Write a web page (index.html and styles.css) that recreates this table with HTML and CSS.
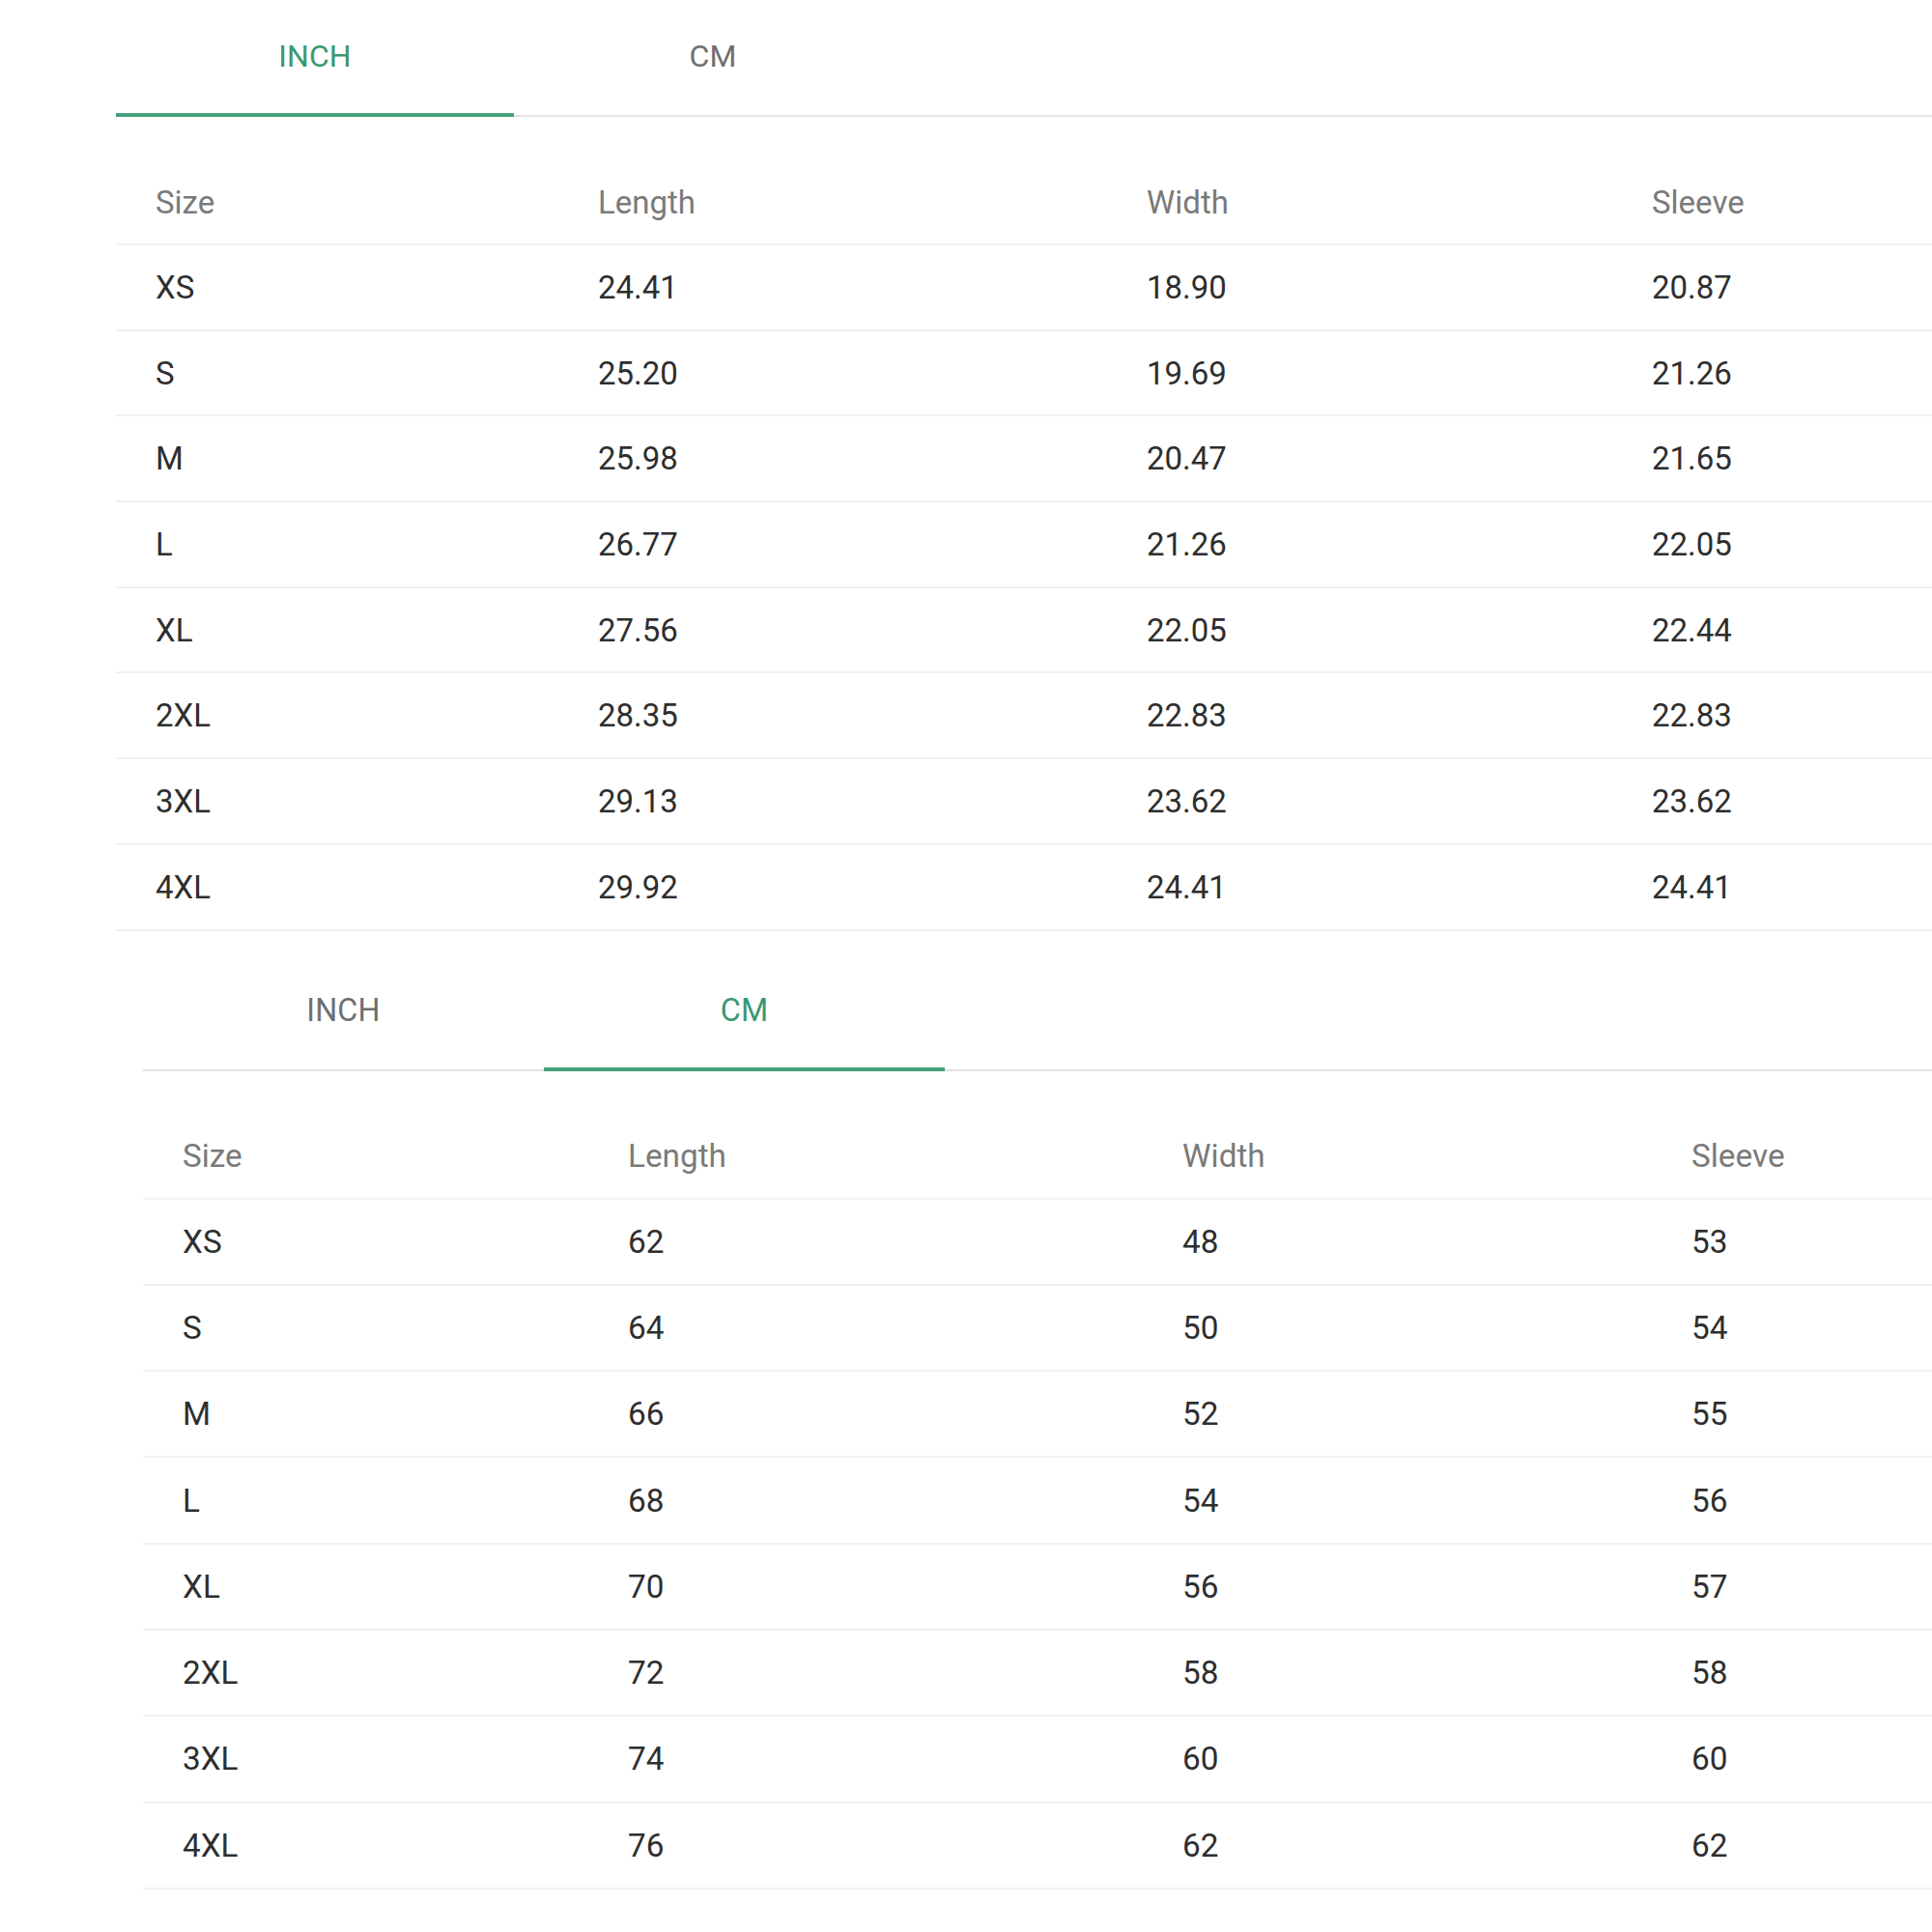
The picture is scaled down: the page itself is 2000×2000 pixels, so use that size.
FILE: index.html
```html
<!DOCTYPE html>
<html>
<head>
<meta charset="utf-8">
<link rel="stylesheet" href="styles.css">
</head>
<body>
<section class="chart chart-inch">
  <div class="tabs">
    <div class="tab active">INCH</div>
    <div class="tab">CM</div>
  </div>
  <table class="sizes">
    <colgroup>
      <col class="c1"><col class="c2"><col class="c3"><col class="c4">
    </colgroup>
    <thead>
      <tr><th>Size</th><th>Length</th><th>Width</th><th>Sleeve</th></tr>
    </thead>
    <tbody>
      <tr><td>XS</td><td>24.41</td><td>18.90</td><td>20.87</td></tr>
      <tr><td>S</td><td>25.20</td><td>19.69</td><td>21.26</td></tr>
      <tr><td>M</td><td>25.98</td><td>20.47</td><td>21.65</td></tr>
      <tr><td>L</td><td>26.77</td><td>21.26</td><td>22.05</td></tr>
      <tr><td>XL</td><td>27.56</td><td>22.05</td><td>22.44</td></tr>
      <tr><td>2XL</td><td>28.35</td><td>22.83</td><td>22.83</td></tr>
      <tr><td>3XL</td><td>29.13</td><td>23.62</td><td>23.62</td></tr>
      <tr><td>4XL</td><td>29.92</td><td>24.41</td><td>24.41</td></tr>
    </tbody>
  </table>
</section>
<section class="chart chart-cm">
  <div class="tabs">
    <div class="tab">INCH</div>
    <div class="tab active">CM</div>
  </div>
  <table class="sizes">
    <colgroup>
      <col class="c1"><col class="c2"><col class="c3"><col class="c4">
    </colgroup>
    <thead>
      <tr><th>Size</th><th>Length</th><th>Width</th><th>Sleeve</th></tr>
    </thead>
    <tbody>
      <tr><td>XS</td><td>62</td><td>48</td><td>53</td></tr>
      <tr><td>S</td><td>64</td><td>50</td><td>54</td></tr>
      <tr><td>M</td><td>66</td><td>52</td><td>55</td></tr>
      <tr><td>L</td><td>68</td><td>54</td><td>56</td></tr>
      <tr><td>XL</td><td>70</td><td>56</td><td>57</td></tr>
      <tr><td>2XL</td><td>72</td><td>58</td><td>58</td></tr>
      <tr><td>3XL</td><td>74</td><td>60</td><td>60</td></tr>
      <tr><td>4XL</td><td>76</td><td>62</td><td>62</td></tr>
    </tbody>
  </table>
</section>
</body>
</html>
```
FILE: styles.css
```css
html, body {
  margin: 0;
  padding: 0;
  background: #ffffff;
  overflow: hidden;
}
body {
  font-family: Roboto, "Liberation Sans", Arial, sans-serif;
  width: 2000px;
  height: 2000px;
}
.chart {
  width: 2300px;
}
.chart-inch {
  margin-left: 120px;
}
.chart-cm {
  margin-left: 148px;
  margin-top: 23px;
}
.tabs {
  display: flex;
  border-bottom: 2px solid #e3e3e3;
}
.tab {
  box-sizing: border-box;
  width: 412px;
  height: 121px;
  margin-bottom: -2px;
  border-bottom: 4px solid transparent;
  display: flex;
  align-items: center;
  justify-content: center;
  padding-bottom: 2px;
  font-size: 32px;
  color: #6f6f6f;
  letter-spacing: 0.1px;
}
.tab.active {
  color: #3a9874;
  border-bottom-color: #47a07c;
}
.sizes {
  border-collapse: collapse;
  table-layout: fixed;
  width: 2200px;
  margin-top: 45px;
  font-size: 33px;
}
.sizes th,
.sizes td {
  text-align: left;
  padding: 0 0 0 41px;
  border-bottom: 2px solid #f1f1f1;
  white-space: nowrap;
}
.sizes th {
  font-weight: 400;
  color: #7a7a7a;
  height: 86px;
}
.sizes td {
  color: #2e2e2e;
  height: 86.7px;
}
.chart-inch .c1 { width: 458px; }
.chart-inch .c2 { width: 568px; }
.chart-inch .c3 { width: 523px; }
.chart-inch .c4 { width: 651px; }

.chart-cm .tab {
  width: 415px;
  height: 122px;
  padding-bottom: 0;
  font-size: 32.3px;
}
.chart-cm .sizes {
  font-size: 33.3px;
  margin-top: 44px;
}
.chart-cm .sizes th { height: 87px; }
.chart-cm .sizes td { height: 87.3px; }
.chart-cm .c1 { width: 461px; }
.chart-cm .c2 { width: 574px; }
.chart-cm .c3 { width: 527px; }
.chart-cm .c4 { width: 638px; }
```
